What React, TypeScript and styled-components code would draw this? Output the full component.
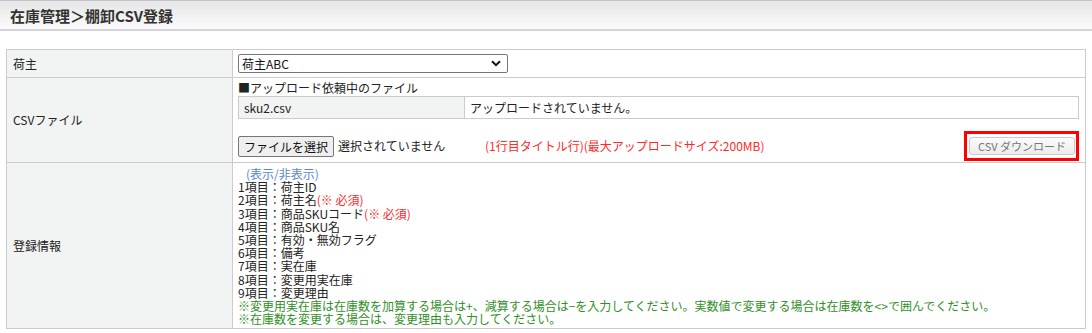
import React from 'react';
import styled, { createGlobalStyle } from 'styled-components';

const GlobalStyle = createGlobalStyle`
  body {
    margin: 0;
    background: #ffffff;
    font-family: "Noto Sans CJK JP", "Noto Sans", sans-serif;
    font-size: 12px;
    color: #222222;
  }
`;

const Header = styled.div`
  height: 28px;
  border-top: 1px solid #c4c2cc;
  border-bottom: 2px solid #d6d3dc;
  background: linear-gradient(#e6e6e6, #fbfbfb);
  display: flex;
  align-items: center;
  padding-left: 10px;
`;

const Title = styled.h1`
  margin: 0;
  font-size: 15px;
  font-weight: 700;
  color: #333333;
`;

const Main = styled.div`
  padding: 18px 6px 0 6px;
`;

const FormTable = styled.table`
  width: 1080px;
  border-collapse: collapse;
  border: 1px solid #cccccc;
  table-layout: fixed;
`;

const Row = styled.tr<{ $h: number }>`
  height: ${(p) => p.$h}px;
`;

const Label = styled.th`
  width: 213px;
  background: #f2f3f3;
  border: 1px solid #cccccc;
  text-align: left;
  font-weight: 400;
  padding: 0 6px;
  vertical-align: middle;
  line-height: 14px;
`;

const Value = styled.td`
  border: 1px solid #cccccc;
  padding: 0 6px 0 5px;
  vertical-align: middle;
  line-height: 14px;
`;

const Select = styled.div`
  height: 17px;
  width: 259px;
  border: 1px solid #767676;
  border-radius: 2px;
  display: flex;
  align-items: center;
  justify-content: space-between;
  padding: 0 6px 0 3px;
  color: #111111;
`;

const Caption = styled.div`
  line-height: 14px;
  padding-top: 3px;
`;

const FileTable = styled.table`
  width: 100%;
  border-collapse: collapse;
  margin-top: 1px;
`;

const FileCell = styled.td<{ $head?: boolean }>`
  border: 1px solid #cccccc;
  height: 21px;
  padding: 0 5px;
  background: ${(p) => (p.$head ? '#f2f3f3' : '#ffffff')};
  width: ${(p) => (p.$head ? '215px' : 'auto')};
`;

const UploadBar = styled.div`
  display: flex;
  align-items: center;
  margin-top: 12px;
  padding-bottom: 1px;
`;

const FilePick = styled.div`
  width: 247px;
  display: flex;
  align-items: center;
  gap: 4px;
`;

const PickButton = styled.button`
  font-family: inherit;
  font-size: 12px;
  height: 21px;
  padding: 0 5px;
  background: #efefef;
  border: 1px solid #767676;
  border-radius: 2px;
  color: #111111;
`;

const Note = styled.span<{ $tone: 'red' | 'green' | 'link' }>`
  display: inline-block;
  color: ${(p) => (p.$tone === 'red' ? '#ff2a2a' : p.$tone === 'green' ? '#2f8f1f' : '#5a88c8')};
`;

const Highlight = styled.div`
  margin-left: auto;
  border: 3px solid #ff0000;
  padding: 3px 1px 3px 2px;
`;

const DownloadButton = styled.button`
  font-family: inherit;
  font-size: 11px;
  width: 106px;
  height: 18px;
  padding: 0;
  border: 1px solid #c9c9d2;
  border-radius: 3px;
  background: linear-gradient(#fbfbfb, #ececec);
  color: #777777;
  display: block;
`;

const Items = styled.div`
  line-height: 13.2px;
  padding: 4px 0 3px;
`;

const Line = styled.div`
  height: 13.2px;
`;

const Toggle = styled(Line)`
  padding-left: 8px;
`;

const items: React.ReactNode[] = [
  '荷主ID',
  <>荷主名<Note $tone="red">(※ 必須)</Note></>,
  <>商品SKUコード<Note $tone="red">(※ 必須)</Note></>,
  '商品SKU名',
  '有効・無効フラグ',
  '備考',
  '実在庫',
  '変更用実在庫',
  '変更理由',
];

const Chevron = () => (
  <svg width="10" height="7" viewBox="0 0 10 7">
    <path d="M1 1.2 L5 5.2 L9 1.2" fill="none" stroke="#111" strokeWidth="2" />
  </svg>
);

const App: React.FC = () => {
  return (
    <>
      <GlobalStyle />
      <Header>
        <Title>在庫管理＞棚卸CSV登録</Title>
      </Header>
      <Main>
        <FormTable>
          <tbody>
            <Row $h={28}>
              <Label>荷主</Label>
              <Value>
                <Select>
                  <span>荷主ABC</span>
                  <Chevron />
                </Select>
              </Value>
            </Row>
            <Row $h={84}>
              <Label>CSVファイル</Label>
              <Value>
                <Caption>■アップロード依頼中のファイル</Caption>
                <FileTable>
                  <tbody>
                    <tr>
                      <FileCell $head>sku2.csv</FileCell>
                      <FileCell>アップロードされていません。</FileCell>
                    </tr>
                  </tbody>
                </FileTable>
                <UploadBar>
                  <FilePick>
                    <PickButton>ファイルを選択</PickButton>
                    <span>選択されていません</span>
                  </FilePick>
                  <Note $tone="red">(1行目タイトル行)(最大アップロードサイズ:200MB)</Note>
                  <Highlight>
                    <DownloadButton>CSV ダウンロード</DownloadButton>
                  </Highlight>
                </UploadBar>
              </Value>
            </Row>
            <Row $h={166}>
              <Label>登録情報</Label>
              <Value>
                <Items>
                  <Toggle>
                    <Note $tone="link">(表示/非表示)</Note>
                  </Toggle>
                  {items.map((item, i) => (
                    <Line key={i}>
                      {i + 1}項目：{item}
                    </Line>
                  ))}
                  <Line>
                    <Note $tone="green">
                      ※変更用実在庫は在庫数を加算する場合は+、減算する場合は−を入力してください。実数値で変更する場合は在庫数を&lt;&gt;で囲んでください。
                    </Note>
                  </Line>
                  <Line>
                    <Note $tone="green">※在庫数を変更する場合は、変更理由も入力してください。</Note>
                  </Line>
                </Items>
              </Value>
            </Row>
          </tbody>
        </FormTable>
      </Main>
    </>
  );
};

export default App;
